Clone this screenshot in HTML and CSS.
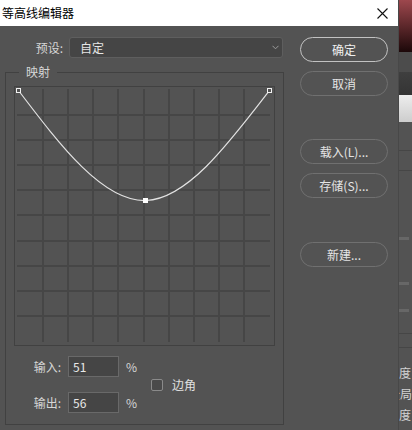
FILE: index.html
```html
<!DOCTYPE html>
<html lang="zh">
<head>
<meta charset="utf-8">
<title>等高线编辑器</title>
<link rel="stylesheet" href="styles.css">
</head>
<body>
<div class="screen">
  <div class="dialog">
    <div class="titlebar">
      <span class="title">等高线编辑器</span>
      <svg class="close" width="11" height="11" viewBox="0 0 11 11"><path d="M0.5 0.5L10.5 10.5M10.5 0.5L0.5 10.5" stroke="#111" stroke-width="1.1" fill="none"/></svg>
    </div>
    <div class="body">
      <div class="left">
        <div class="preset">
          <span class="lbl">预设:</span>
          <div class="select"><span>自定</span><svg width="7" height="5" viewBox="0 0 7 5"><path d="M0.5 0.8L3.5 3.8L6.5 0.8" stroke="#9c9c9c" stroke-width="1" fill="none"/></svg></div>
        </div>
        <fieldset class="group">
          <legend>映射</legend>
          <svg class="graph" width="261" height="260" viewBox="0 0 261 260">
            <rect x="0.5" y="0.5" width="260" height="259" fill="none" stroke="#414141"/>
            <g stroke="#464646" stroke-width="2">
              <path d="M29 3V256M54 3V256M79 3V256M104 3V256M130 3V256M155 3V256M180 3V256M205 3V256M230 3V256"/>
              <path d="M3 29H256M3 54H256M3 79H256M3 104H256M3 129H256M3 155H256M3 180H256M3 205H256M3 230H256"/>
            </g>
            <path d="M4.5 4.5C46.7 60 89.3 116 132 114.5C173 113 214 58.5 255.5 4.5" fill="none" stroke="#e2e2e2" stroke-width="1.2"/>
            <rect x="2.5" y="2.5" width="4" height="4" fill="#535353" stroke="#f2f2f2"/>
            <rect x="253.5" y="2.5" width="4" height="4" fill="#535353" stroke="#f2f2f2"/>
            <rect x="129" y="112" width="5" height="5" fill="#ffffff"/>
          </svg>
          <div class="io">
            <div class="fields">
              <span class="flbl">输入:</span><div class="num">51</div><span class="pct">%</span>
              <span class="flbl">输出:</span><div class="num">56</div><span class="pct">%</span>
            </div>
            <div class="corner"><span class="cb"></span><span class="clbl">边角</span></div>
          </div>
        </fieldset>
      </div>
      <div class="right">
        <button class="btn primary">确定</button>
        <button class="btn">取消</button>
        <button class="btn sep">载入(L)...</button>
        <button class="btn">存储(S)...</button>
        <button class="btn sep2">新建...</button>
      </div>
    </div>
  </div>
  <div class="strip">
    <div class="s-red"></div>
    <div class="s-a"></div>
    <div class="s-b"></div>
    <div class="s-c"></div>
    <div class="s-gap h28"></div>
    <div class="s-line"></div>
    <div class="s-gap h19"></div>
    <div class="s-line"></div>
    <div class="s-gap h66"></div>
    <div class="s-bar"></div>
    <div class="s-gap h42"></div>
    <div class="s-bar"></div>
    <div class="s-gap h24"></div>
    <div class="s-bar"></div>
    <div class="s-gap h21"></div>
    <div class="s-line"></div>
    <div class="s-gap h13"></div>
    <div class="s-line"></div>
    <div class="s-gap h14"></div>
    <div class="s-txt">度</div>
    <div class="s-txt end">全局</div>
    <div class="s-txt">度</div>
  </div>
</div>
</body>
</html>
```
FILE: styles.css
```css
* { box-sizing: border-box; }
html, body { margin: 0; padding: 0; }
body {
  width: 412px;
  height: 430px;
  overflow: hidden;
  background: #535353;
  font-family: "Noto Sans CJK SC", "Microsoft YaHei", sans-serif;
  font-size: 12px;
}
.screen { display: flex; width: 412px; height: 430px; }
.dialog { width: 398px; display: flex; flex-direction: column; background: #535353; }
.titlebar {
  height: 26px;
  flex: none;
  background: #ffffff;
  display: flex;
  align-items: center;
  justify-content: space-between;
  padding: 0 10px 0 2px;
}
.title { color: #000; font-size: 12px; line-height: 16px; }
.close { display: block; }
.body { flex: 1; display: flex; }
.left { width: 284px; flex: none; padding-left: 5px; }
.preset { display: flex; align-items: center; margin-top: 11px; height: 21px; }
.lbl { width: 58px; text-align: right; color: #d6d6d6; margin-right: 6px; line-height: 16px; }
.select {
  width: 214px;
  height: 21px;
  background: #454545;
  border: 1px solid #5e5e5e;
  border-radius: 3px;
  display: flex;
  align-items: center;
  justify-content: space-between;
  padding: 0 3px 0 10px;
  color: #e6e6e6;
  line-height: 16px;
}
.select svg { display: block; }
.group {
  margin: 5px 0 0 0;
  width: 279px;
  min-width: 0;
  border: 1px solid #414141;
  padding: 5px 8px 11px 8px;
}
.group legend {
  padding: 0 7px;
  margin-left: 5px;
  line-height: 18px;
  color: #d6d6d6;
  font-size: 12px;
}
.graph { display: block; }
.io { display: flex; align-items: center; margin-top: 10px; }
.fields {
  display: grid;
  grid-template-columns: 47px 51px 11px;
  grid-auto-rows: 21px;
  column-gap: 7px;
  row-gap: 15px;
  align-items: center;
}
.flbl { text-align: right; color: #d6d6d6; line-height: 16px; }
.num {
  height: 21px;
  background: #454545;
  border: 1px solid #696969;
  color: #e8e8e8;
  padding-left: 4px;
  line-height: 19px;
}
.pct { color: #d6d6d6; line-height: 16px; }
.corner { display: flex; align-items: center; margin-left: 14px; }
.cb {
  width: 12px;
  height: 12px;
  border: 1px solid #8a8a8a;
  border-radius: 2px;
  background: #4a4a4a;
  margin-right: 9px;
}
.clbl { color: #e0e0e0; line-height: 16px; }
.right { display: flex; flex-direction: column; padding: 11px 0 0 16px; }
.btn {
  width: 88px;
  height: 25px;
  padding: 0;
  border: 1px solid #707070;
  border-radius: 13px;
  background: transparent;
  color: #e4e4e4;
  font-family: "Noto Sans CJK SC", "Microsoft YaHei", sans-serif;
  font-size: 12px;
  line-height: 16px;
}
.btn + .btn { margin-top: 9px; }
.btn.sep { margin-top: 43px; }
.btn.sep2 { margin-top: 44px; }
.btn.primary { border: 1.5px solid #c2c2c2; color: #f0f0f0; }
.strip {
  width: 14px;
  flex: none;
  display: flex;
  flex-direction: column;
  overflow: hidden;
  background: #535353;
  border-left: 1px solid #484848;
}
.s-red { height: 52px; flex: none; background: linear-gradient(#9d474d, #1c0809); }
.s-a { height: 20px; flex: none; background: #4c4c4c; }
.s-b { height: 23px; flex: none; background: linear-gradient(#3f3f3f, #343434); }
.s-c { height: 27px; flex: none; background: linear-gradient(#ededed, #cdcdcd); }
.s-gap { flex: none; }
.h28 { height: 28px; }
.h19 { height: 19px; }
.h66 { height: 66px; }
.h42 { height: 42px; }
.h24 { height: 24px; }
.h21 { height: 21px; }
.h13 { height: 13px; }
.h14 { height: 14px; }
.s-line { height: 1px; flex: none; background: #464646; }
.s-bar { height: 3px; width: 10px; flex: none; background: #676767; }
.s-txt {
  height: 21px;
  flex: none;
  line-height: 21px;
  color: #d2d2d2;
  white-space: nowrap;
  display: flex;
  justify-content: flex-start;
}
.s-txt.end { justify-content: flex-end; }
```
